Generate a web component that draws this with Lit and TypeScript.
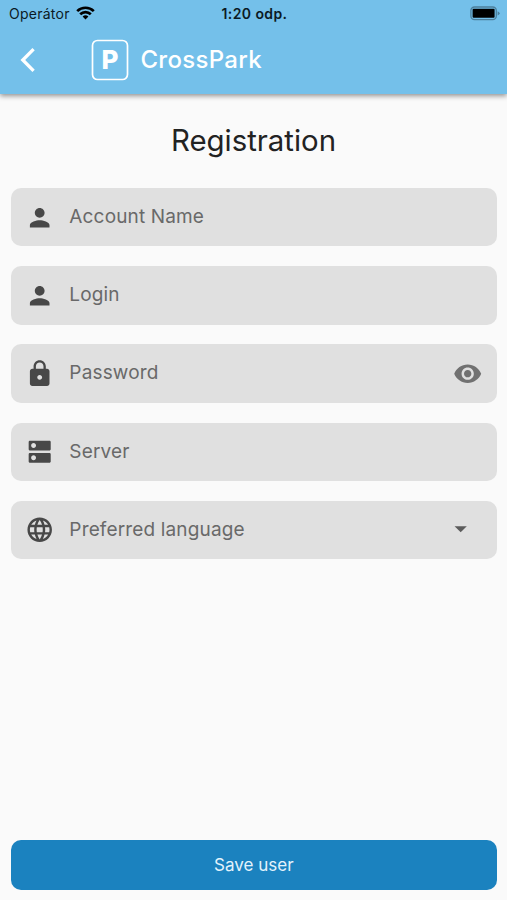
import { LitElement, html, css, svg, nothing } from "lit";
import { customElement, property } from "lit/decorators.js";

const ICONS: Record<string, string> = {
  person:
    "M12 12c2.21 0 4-1.79 4-4s-1.79-4-4-4-4 1.79-4 4 1.79 4 4 4zm0 2c-2.67 0-8 1.34-8 4v2h16v-2c0-2.66-5.33-4-8-4z",
  lock: "M18 8h-1V6c0-2.76-2.24-5-5-5S7 3.24 7 6v2H6c-1.1 0-2 .9-2 2v10c0 1.1.9 2 2 2h12c1.1 0 2-.9 2-2V10c0-1.1-.9-2-2-2zm-6 9c-1.1 0-2-.9-2-2s.9-2 2-2 2 .9 2 2-.9 2-2 2zm3.1-9H8.9V6c0-1.71 1.39-3.1 3.1-3.1 1.71 0 3.1 1.39 3.1 3.1v2z",
  dns: "M20 13H4c-.55 0-1 .45-1 1v6c0 .55.45 1 1 1h16c.55 0 1-.45 1-1v-6c0-.55-.45-1-1-1zM7 19c-1.1 0-2-.9-2-2s.9-2 2-2 2 .9 2 2-.9 2-2 2zM20 3H4c-.55 0-1 .45-1 1v6c0 .55.45 1 1 1h16c.55 0 1-.45 1-1V4c0-.55-.45-1-1-1zM7 9c-1.1 0-2-.9-2-2s.9-2 2-2 2 .9 2 2-.9 2-2 2z",
  language:
    "M11.99 2C6.47 2 2 6.48 2 12s4.47 10 9.99 10C17.52 22 22 17.52 22 12S17.52 2 11.99 2zm6.93 6h-2.95c-.32-1.25-.78-2.45-1.38-3.56 1.84.63 3.37 1.91 4.33 3.56zM12 4.04c.83 1.2 1.48 2.53 1.91 3.96h-3.82c.43-1.43 1.08-2.76 1.91-3.96zM4.26 14C4.1 13.36 4 12.69 4 12s.1-1.36.26-2h3.38c-.08.66-.14 1.32-.14 2 0 .68.06 1.34.14 2H4.26zm.82 2h2.95c.32 1.25.78 2.45 1.38 3.56-1.84-.63-3.37-1.9-4.33-3.56zm2.95-8H5.08c.96-1.66 2.49-2.93 4.33-3.56C8.81 5.55 8.35 6.75 8.03 8zM12 19.96c-.83-1.2-1.48-2.53-1.91-3.96h3.82c-.43 1.43-1.08 2.76-1.91 3.96zM14.34 14H9.66c-.09-.66-.16-1.32-.16-2 0-.68.07-1.35.16-2h4.68c.09.65.16 1.32.16 2 0 .68-.07 1.34-.16 2zm.25 5.56c.6-1.11 1.06-2.31 1.38-3.56h2.95c-.96 1.65-2.49 2.93-4.33 3.56zM16.36 14c.08-.66.14-1.32.14-2 0-.68-.06-1.34-.14-2h3.38c.16.64.26 1.31.26 2s-.1 1.36-.26 2h-3.38z",
  eye: "M12 4.5C7 4.5 2.73 7.61 1 12c1.73 4.39 6 7.5 11 7.5s9.27-3.11 11-7.5c-1.73-4.39-6-7.5-11-7.5zM12 17c-2.76 0-5-2.24-5-5s2.24-5 5-5 5 2.24 5 5-2.24 5-5 5zm0-8c-1.66 0-3 1.34-3 3s1.34 3 3 3 3-1.34 3-3-1.34-3-3-3z",
  dropdown: "M7 10l5 5 5-5z",
};

@customElement("md-icon")
class MdIcon extends LitElement {
  @property() name = "";
  static styles = css`
    :host { display: block; width: 29.4px; height: 29.4px; }
    svg { display: block; width: 100%; height: 100%; fill: currentColor; }
  `;
  render() {
    return html`<svg viewBox="0 0 24 24">${svg`<path d=${ICONS[this.name]}></path>`}</svg>`;
  }
}

@customElement("form-field")
class FormField extends LitElement {
  @property() icon = "";
  @property() label = "";
  @property() trailing = "";
  static styles = css`
    :host {
      display: flex;
      align-items: center;
      box-sizing: border-box;
      height: 58.4px;
      padding: 0 14.6px;
      border-radius: 10px;
      background: #e0e0e0;
    }
    .lead { color: #484848; }
    .label {
      flex: 1;
      margin: -0.3px 0 0 14.7px;
      font-size: 19px;
      line-height: 24px;
      letter-spacing: 0.15px;
      color: #696969;
    }
    .eye { color: #717171; }
    .dropdown { color: #5c5c5c; margin: -2px 7.3px 0 0; }
  `;
  render() {
    return html`
      <md-icon class="lead" name=${this.icon}></md-icon>
      <span class="label">${this.label}</span>
      ${this.trailing
        ? html`<md-icon class=${this.trailing} name=${this.trailing}></md-icon>`
        : nothing}
    `;
  }
}

@customElement("app-root")
class AppRoot extends LitElement {
  static styles = css`
    :host {
      display: flex;
      flex-direction: column;
      box-sizing: border-box;
      height: 900px;
      background: #fafafa;
      font-family: Inter, "Liberation Sans", sans-serif;
      overflow: hidden;
    }
    header {
      height: 94px;
      background: #74c0ea;
      box-shadow: 0 2px 5px rgba(0, 0, 0, 0.42);
    }
    .status {
      display: grid;
      grid-template-columns: 1fr auto 1fr;
      align-items: center;
      height: 27px;
      padding: 0 7px 0 9px;
      color: #0b1a24;
      font-size: 14px;
      line-height: 18px;
    }
    .carrier { display: flex; align-items: center; gap: 6px; letter-spacing: 0.25px; }
    .wifi { width: 19px; height: 14px; margin-top: -1px; }
    .time { font-weight: 600; letter-spacing: 0.4px; }
    .battery { justify-self: end; width: 30px; height: 15px; }
    .bar { display: flex; align-items: center; height: 66px; padding-left: 20px; }
    .back { width: 16px; height: 26px; }
    .logo { width: 38px; height: 42px; margin-left: 55px; }
    .brand {
      margin-left: 11.4px;
      color: #fff;
      font-size: 24px;
      font-weight: 450;
      line-height: 30px;
      letter-spacing: 0.3px;
    }
    h1 {
      margin: 28px 0 0;
      text-align: center;
      font-size: 29.4px;
      font-weight: 400;
      line-height: 38px;
      color: #222;
    }
    .form {
      display: flex;
      flex-direction: column;
      flex: 1;
      gap: 19.8px;
      padding: 28px 10px 0 10.7px;
    }
    .save {
      height: 50px;
      margin: 0 10px 10px 10.7px;
      border: 0;
      border-radius: 10px;
      background: #1b82bf;
      color: #e3f3fc;
      font: 400 17px/22px Inter, "Liberation Sans", sans-serif;
    }
  `;
  render() {
    return html`
      <header>
        <div class="status">
          <div class="carrier">
            <span>Operátor</span>
            <svg class="wifi" viewBox="0 0 19 14" fill="none" stroke="#000" stroke-width="2.7">
              <path d="M1.2 5.1A12 12 0 0 1 17.8 5.1"></path>
              <path d="M4.2 8.3A7.6 7.6 0 0 1 14.8 8.3"></path>
              <path d="M9.5 13.6L6.6 10.6A4.2 4.2 0 0 1 12.4 10.6Z" fill="#000" stroke="none"></path>
            </svg>
          </div>
          <span class="time">1:20 odp.</span>
          <svg class="battery" viewBox="0 0 30 15">
            <rect x="0.9" y="1" width="25.4" height="12.6" rx="3.6" fill="none" stroke="#4c7f9c" stroke-width="1.3"></rect>
            <rect x="2.6" y="2.8" width="22" height="9" rx="1" fill="#000"></rect>
            <path d="M27.6 5.2Q29.6 6 29.6 7.3T27.6 9.5Z" fill="#4c7f9c"></path>
          </svg>
        </div>
        <div class="bar">
          <svg class="back" viewBox="0 0 16 26" fill="none" stroke="#fff" stroke-width="3.3">
            <path d="M13.6 2.2L2.8 13L13.6 23.8"></path>
          </svg>
          <svg class="logo" viewBox="0 0 38 42">
            <rect x="1.5" y="1.5" width="35" height="39" rx="5" fill="none" stroke="#fff" stroke-width="1.7"></rect>
            <text x="19" y="30.2" text-anchor="middle" font-size="26" font-weight="800" fill="#fff">P</text>
          </svg>
          <span class="brand">CrossPark</span>
        </div>
      </header>
      <h1>Registration</h1>
      <div class="form">
        <form-field icon="person" label="Account Name"></form-field>
        <form-field icon="person" label="Login"></form-field>
        <form-field icon="lock" label="Password" trailing="eye"></form-field>
        <form-field icon="dns" label="Server"></form-field>
        <form-field icon="language" label="Preferred language" trailing="dropdown"></form-field>
      </div>
      <button class="save">Save user</button>
    `;
  }
}
